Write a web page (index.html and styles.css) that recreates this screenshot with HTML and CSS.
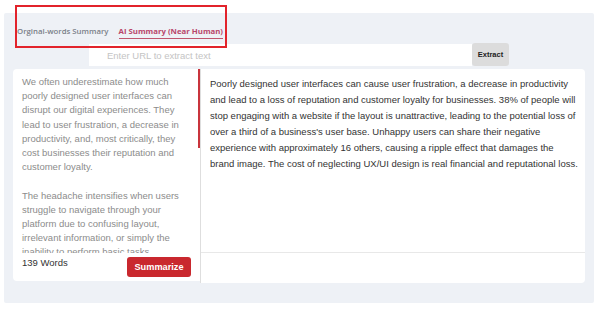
FILE: index.html
```html
<!DOCTYPE html>
<html lang="en">
<head>
	<meta charset="UTF-8">
	<title>Summarizer</title>
	<link rel="stylesheet" href="styles.css">
</head>
<body>
	<div class="wrap">
		<!-- tabs -->
		<div class="tabs">
			<span class="tab">Orginal-words Summary</span>
			<span class="tab active">AI Summary (Near Human)</span>
		</div>
		<div class="highlight"></div>

		<!-- url bar -->
		<div class="urlbar">
			<input class="url" type="text" placeholder="Enter URL to extract text">
			<button class="extract">Extract</button>
		</div>

		<div class="panels">
			<div class="panel left">
				<div class="source">
					<p>We often underestimate how much poorly designed user interfaces can disrupt our digital experiences. They lead to user frustration, a decrease in productivity, and, most critically, they cost businesses their reputation and customer loyalty.</p>
					<p>The headache intensifies when users struggle to navigate through your platform due to confusing layout, irrelevant information, or simply the inability to perform basic tasks. Research shows that 38% of people will stop engaging with a website if the content or layout is unattractive. That is more than a third of your potential user base lost.</p>
					<p>Worse, unhappy users tell an average of 16 other people about their experience, creating a ripple effect that harms your brand image. Neglecting UX/UI design carries a real cost, both financial and reputational. It is time to put your users first and build interfaces they love to use.</p>
				</div>
				<!-- scroll thumb -->
				<div class="thumb"></div>
				<div class="foot">
					<span class="count">139 Words</span>
					<button class="summarize">Summarize</button>
				</div>
			</div>
			<div class="panel right">
				<div class="result">
					Poorly designed user interfaces can cause user frustration, a decrease in productivity and lead to a loss of reputation and customer loyalty for businesses. 38% of people will stop engaging with a website if the layout is unattractive, leading to the potential loss of over a third of a business's user base. Unhappy users can share their negative experience with approximately 16 others, causing a ripple effect that damages the brand image. The cost of neglecting UX/UI design is real financial and reputational loss.
				</div>
				<div class="foot"></div>
			</div>
		</div>
	</div>
</body>
</html>
```
FILE: styles.css
```css
* {
	margin: 0;
	padding: 0;
	box-sizing: border-box;
}
body {
	background-color: #fff;
	font-family: "Liberation Sans", Arial, sans-serif;
}
.wrap {
	position: relative;
	width: 590px;
	height: 290px;
	margin: 13px 0 0 4px;
	padding: 13px 9px 0 9px;
	background-color: #eef1f6;
	border-radius: 2px;
}
.tabs {
	display: flex;
	gap: 10px;
	margin-left: 4px;
	height: 13px;
}
.tab {
	font-family: "Open Sans", sans-serif;
	font-size: 7.8px;
	font-weight: 600;
	line-height: 11px;
	color: #7a7f88;
}
.tab.active {
	color: #b8466a;
	font-weight: 700;
	border-bottom: 1px solid #c0566f;
}
.highlight {
	position: absolute;
	left: 11px;
	top: -8px;
	width: 212px;
	height: 43px;
	border: 2px solid #e2232b;
}
.urlbar {
	display: flex;
	justify-content: center;
	margin-top: 5px;
	height: 22px;
}
.url {
	width: 383px;
	height: 22px;
	border: none;
	outline: none;
	background-color: #fff;
	padding-left: 18px;
	font-family: "Liberation Sans", Arial, sans-serif;
	font-size: 9.5px;
}
.url::placeholder {
	color: #c4c4c4;
}
.extract {
	width: 37px;
	height: 23px;
	margin-top: -1px;
	border: none;
	border-radius: 3px;
	background-color: #dcdcdc;
	color: #222;
	font-family: "Liberation Sans", Arial, sans-serif;
	font-size: 7.5px;
	font-weight: bold;
}
.panels {
	display: flex;
	margin-top: 3px;
	height: 214px;
}
.panel {
	display: flex;
	flex-direction: column;
	background-color: #fff;
}
.left {
	position: relative;
	width: 187px;
	height: 212px;
	border-radius: 4px 0 0 4px;
}
.right {
	width: 385px;
	border-left: 1px solid #dedede;
	border-radius: 0 4px 4px 0;
}
.source {
	height: 184px;
	overflow: hidden;
	padding: 6px 16px 6px 9px;
	font-size: 9.5px;
	line-height: 14.2px;
	color: #8c8c8c;
}
.source p + p {
	margin-top: 14.2px;
}
.thumb {
	position: absolute;
	top: 0;
	right: 0;
	width: 2px;
	height: 79px;
	background-color: #c9343c;
}
.left .foot {
	display: flex;
	justify-content: space-between;
	align-items: flex-start;
	padding: 3px 9px 0 9px;
}
.count {
	font-size: 9.5px;
	line-height: 14px;
	color: #333;
}
.summarize {
	width: 64px;
	height: 20px;
	margin-top: 1px;
	border: none;
	border-radius: 3px;
	background-color: #c9282e;
	color: #fff;
	font-family: "Liberation Sans", Arial, sans-serif;
	font-size: 9.2px;
	font-weight: bold;
}
.result {
	height: 184px;
	padding: 7px 7px 0 9px;
	font-size: 9.5px;
	line-height: 16px;
	color: #333;
	border-bottom: 1px solid #e8e8e8;
}
.right .foot {
	height: 30px;
}
```
